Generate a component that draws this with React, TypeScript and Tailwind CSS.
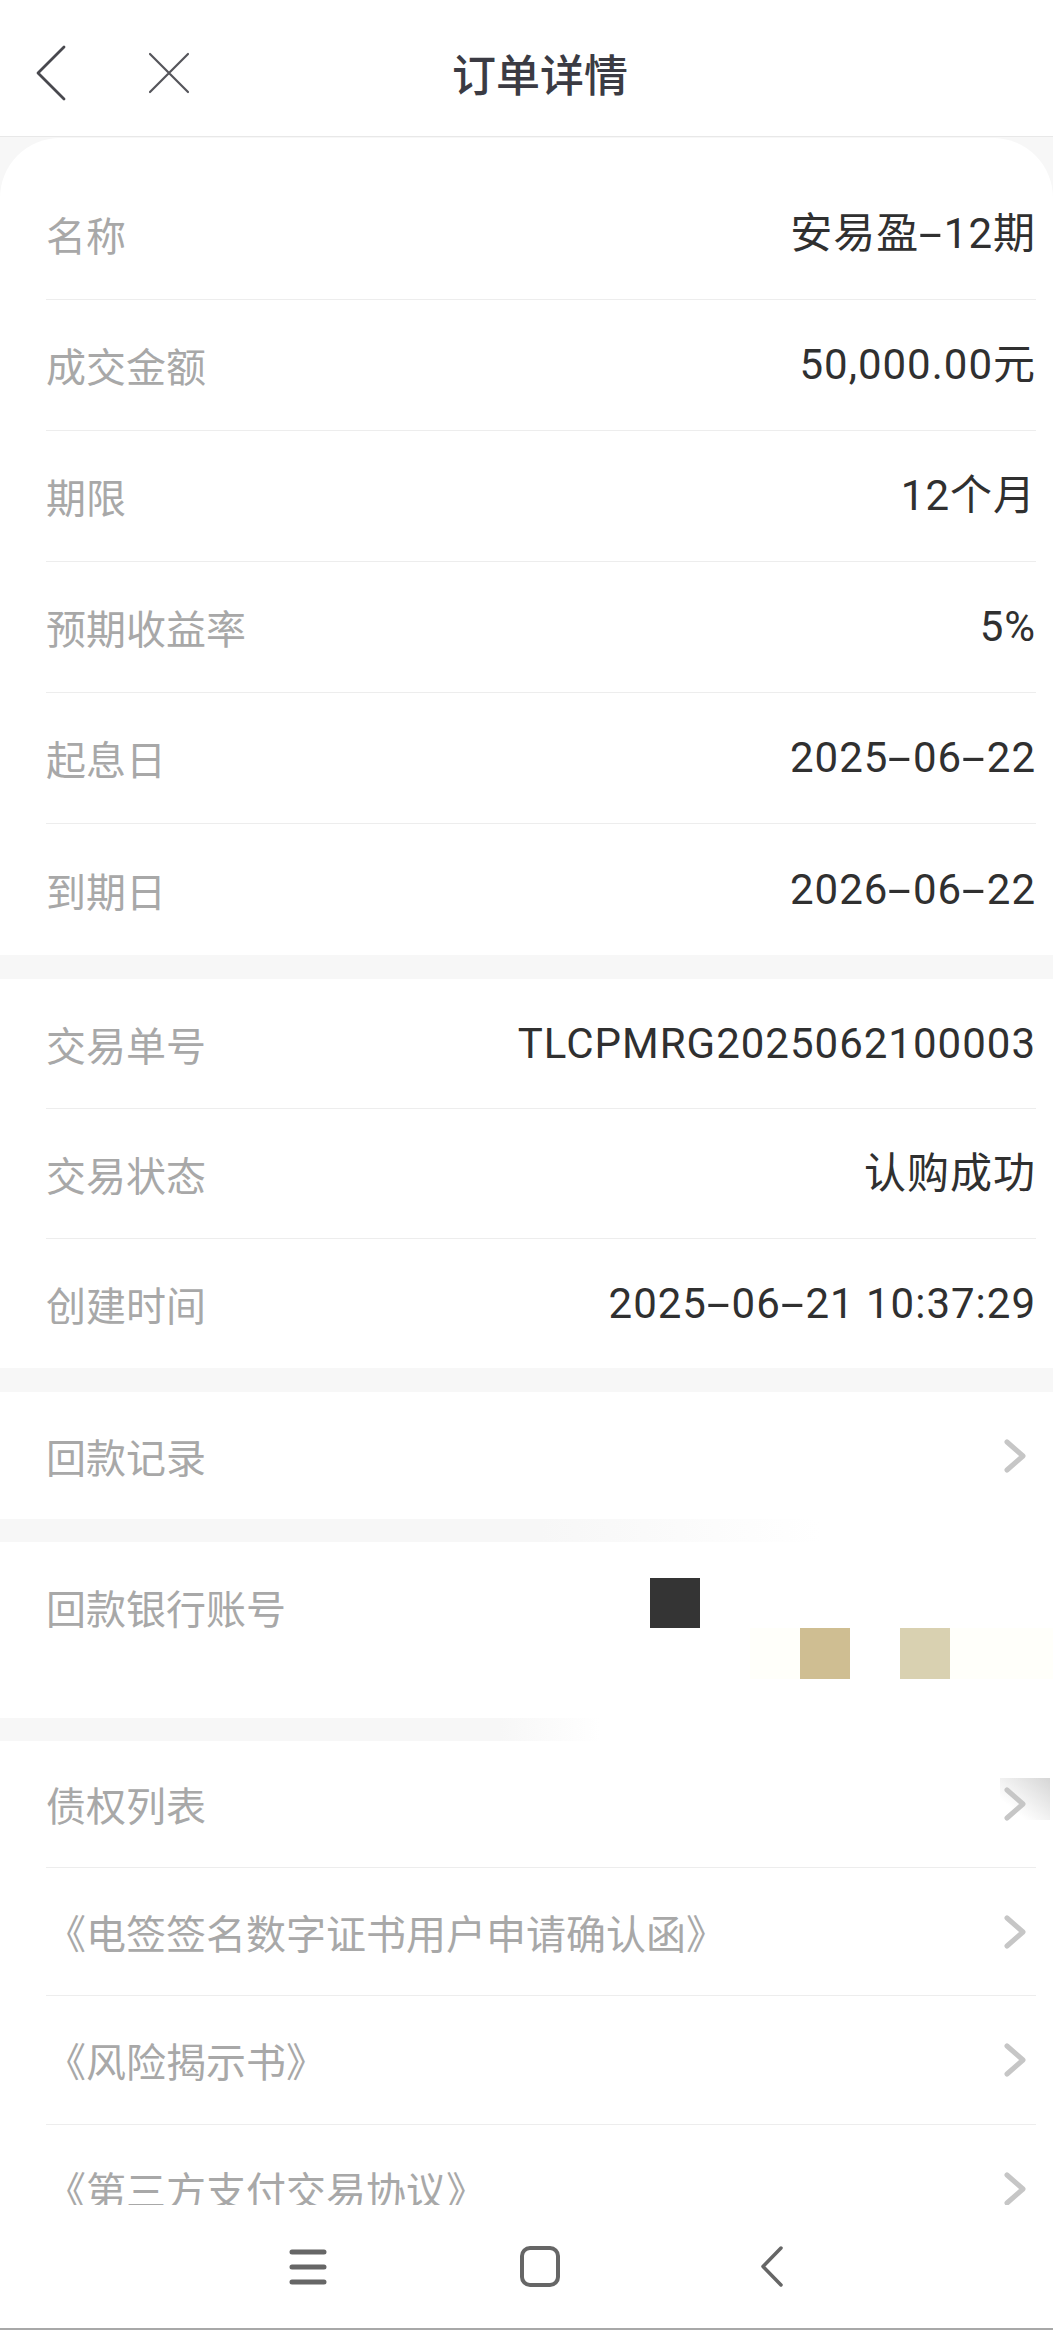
import React from "react";

const cjk = "font-['Noto_Sans_CJK_SC',sans-serif]";
const num = "font-['Roboto','Noto_Sans_CJK_SC',sans-serif]";

interface RowProps {
  label: string;
  value?: string;
  h: string;
  last?: boolean;
  arrow?: boolean;
}

function Chevron() {
  return (
    <svg width="24" height="34" viewBox="0 0 24 34" fill="none" className="mr-[8px]">
      <path d="M3 3 L19 17 L3 31" stroke="#c6c6c6" strokeWidth="5" strokeLinecap="round" strokeLinejoin="round" />
    </svg>
  );
}

// the app's font draws "-" as a long bar, so stretch the hyphen a little
function Value({ text }: { text: string }) {
  const parts = text.split("-");
  return (
    <span className={`${num} text-[42px] leading-none tracking-[1px] text-[#303030]`}>
      {parts.map((p, i) => (
        <React.Fragment key={i}>
          {i > 0 && <span className="inline-block scale-x-[2] mx-[6px]">-</span>}
          {p}
        </React.Fragment>
      ))}
    </span>
  );
}

function Row({ label, value, h, last, arrow }: RowProps) {
  return (
    <div className={`flex items-center justify-between ${h} ${last ? "" : "border-b border-[#ededed]"}`}>
      <span className={`${cjk} text-[40px] leading-none text-[#a8a8a8]`}>{label}</span>
      {value && <Value text={value} />}
      {arrow && <Chevron />}
    </div>
  );
}

export default function App() {
  return (
    <div className="w-[1053px] h-[2330px] flex flex-col overflow-hidden bg-white">
      {/* header */}
      <div className="h-[137px] shrink-0 flex items-center pt-[10px] border-b border-[#e8e8e8] bg-white">
        <svg width="32" height="56" viewBox="0 0 32 56" fill="none" className="ml-[35px]">
          <path d="M29 2 L3 28 L29 54" stroke="#48484e" strokeWidth="2.8" strokeLinecap="round" strokeLinejoin="round" />
        </svg>
        <svg width="44" height="44" viewBox="0 0 44 44" fill="none" className="ml-[80px]">
          <path d="M3 3 L41 41 M41 3 L3 41" stroke="#55555b" strokeWidth="2.2" strokeLinecap="round" />
        </svg>
        <span className={`${cjk} ml-[261px] text-[44px] leading-none font-medium text-[#3b3b43]`}>订单详情</span>
      </div>

      {/* body */}
      <div className="flex-1 overflow-hidden bg-[#f7f7f7] pt-[1px]">
        <div className="bg-white rounded-t-[60px] pt-[31px] pl-[46px] pr-[17px]">
          <Row label="名称" value="安易盈-12期" h="h-[131px]" />
          <Row label="成交金额" value="50,000.00元" h="h-[131px]" />
          <Row label="期限" value="12个月" h="h-[131px]" />
          <Row label="预期收益率" value="5%" h="h-[131px]" />
          <Row label="起息日" value="2025-06-22" h="h-[131px]" />
          <Row label="到期日" value="2026-06-22" h="h-[131px]" last />
        </div>

        <div className="mt-[24px] bg-white pl-[46px] pr-[17px]">
          <Row label="交易单号" value="TLCPMRG2025062100003" h="h-[130px]" />
          <Row label="交易状态" value="认购成功" h="h-[130px]" />
          <Row label="创建时间" value="2025-06-21 10:37:29" h="h-[129px]" last />
        </div>

        <div className="mt-[24px] bg-white pl-[46px] pr-[17px]">
          <Row label="回款记录" h="h-[127px]" last arrow />
        </div>

        <div className="h-[23px] bg-[linear-gradient(to_right,#f7f7f7_540px,#ffffff_820px)]" />

        <div className="h-[176px] bg-white flex pl-[46px]">
          <div className="w-[604px] h-[130px] flex items-center">
            <span className={`${cjk} text-[40px] leading-none text-[#a8a8a8]`}>回款银行账号</span>
          </div>
          <div className="pt-[36px]">
            <div className="w-[50px] h-[50px] bg-[#343434]" />
            <div className="flex ml-[100px]">
              <div className="w-[50px] h-[51px] bg-[#fffffa]" />
              <div className="w-[50px] h-[51px] bg-[#cfbe92]" />
              <div className="w-[50px] h-[51px] bg-white" />
              <div className="w-[50px] h-[51px] bg-[#d9d1b1]" />
              <div className="w-[103px] h-[51px] bg-[#fffffa]" />
            </div>
          </div>
        </div>

        <div className="h-[23px] bg-[linear-gradient(to_right,#f7f7f7_500px,#ffffff_600px)]" />

        <div className="relative bg-white pl-[46px] pr-[17px]">
          <div className="absolute right-[3px] top-[37px] w-[50px] h-[42px] bg-[linear-gradient(to_bottom_left,#d6d6d6,#ffffff_75%)]" />
          <div className="relative">
            <Row label="债权列表" h="h-[127px]" arrow />
            <Row label="《电签签名数字证书用户申请确认函》" h="h-[128px]" arrow />
            <Row label="《风险揭示书》" h="h-[129px]" arrow />
            <Row label="《第三方支付交易协议》" h="h-[128px]" arrow last />
          </div>
        </div>
      </div>

      {/* system nav bar */}
      <div className="h-[125px] shrink-0 bg-white border-b-2 border-[#a8a8a8] flex items-center pl-[289px]">
        <svg width="38" height="36" viewBox="0 0 38 36" fill="none">
          <path d="M3 3 H35 M3 18 H35 M3 33 H35" stroke="#666666" strokeWidth="5" strokeLinecap="round" />
        </svg>
        <svg width="40" height="41" viewBox="0 0 40 41" fill="none" className="ml-[193px]">
          <rect x="2" y="2" width="36" height="37" rx="8" stroke="#666666" strokeWidth="4" />
        </svg>
        <svg width="26" height="41" viewBox="0 0 26 41" fill="none" className="ml-[199px]">
          <path d="M22 2 L4 20.5 L22 39" stroke="#666666" strokeWidth="3.5" strokeLinecap="round" strokeLinejoin="round" />
        </svg>
      </div>
    </div>
  );
}
